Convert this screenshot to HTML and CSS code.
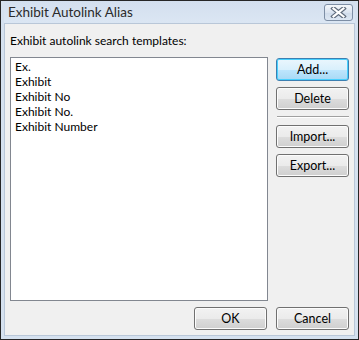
FILE: index.html
```html
<!DOCTYPE html>
<html>
<head>
<meta charset="utf-8">
<link rel="stylesheet" href="styles.css">
</head>
<body>
<div class="window">
  <div class="titlebar">
    <span class="title">Exhibit Autolink Alias</span>
    <div class="close">
      <svg width="17" height="11" viewBox="0 0 17 11">
        <path d="M3.5 1.5 L13.5 9.5 M13.5 1.5 L3.5 9.5" stroke="#5f6b7c" stroke-width="4.5" stroke-linecap="square"/>
        <path d="M3.5 1.5 L13.5 9.5 M13.5 1.5 L3.5 9.5" stroke="#ffffff" stroke-width="2.2" stroke-linecap="square"/>
      </svg>
    </div>
  </div>
  <div class="client">
    <div class="label">Exhibit autolink search templates:</div>
    <div class="main">
      <div class="list">
        <div class="item">Ex.</div>
        <div class="item">Exhibit</div>
        <div class="item">Exhibit No</div>
        <div class="item">Exhibit No.</div>
        <div class="item">Exhibit Number</div>
      </div>
      <div class="side">
        <button class="btn default">Add...</button>
        <button class="btn">Delete</button>
        <div class="sep"></div>
        <button class="btn">Import...</button>
        <button class="btn">Export...</button>
      </div>
    </div>
    <div class="footer">
      <button class="btn">OK</button>
      <button class="btn">Cancel</button>
    </div>
  </div>
</div>
</body>
</html>
```
FILE: styles.css
```css
html, body {
  margin: 0;
  padding: 0;
  background: #ffffff;
}
.window {
  position: relative;
  box-sizing: border-box;
  width: 359px;
  height: 340px;
  border: 1px solid #262626;
  background: #d5e1ef;
  padding: 0 3px 3px 3px;
  display: flex;
  flex-direction: column;
  font-family: Lato, "Noto Sans", sans-serif;
  font-size: 12px;
  color: #000;
}
.titlebar {
  height: 22px;
  flex: none;
  background: linear-gradient(#d3dfee, #dbe6f3);
  position: relative;
}
.title {
  position: absolute;
  left: 4px;
  top: 4px;
  line-height: 15px;
  font-size: 13.5px;
  color: #2a2a2a;
}
.close {
  position: absolute;
  left: 320px;
  top: 3px;
  width: 27px;
  height: 15px;
  border: 1px solid #7d8ea5;
  border-radius: 3px;
  background: linear-gradient(#f4f7fb, #dbe4f0 50%, #cfdbea 51%, #dde7f3);
  display: flex;
  align-items: center;
  justify-content: center;
}
.close svg { display: block; }
.client {
  flex: 1;
  background: #f0f0f0;
  border: 1px solid #b9c7d8;
  padding: 9px 5px 4px 4px;
  display: flex;
  flex-direction: column;
}
.label {
  line-height: 15px;
  padding-left: 1px;
  margin-bottom: 9px;
}
.main {
  display: flex;
  gap: 8px;
  flex: none;
}
.list {
  box-sizing: border-box;
  width: 259px;
  height: 244px;
  margin-left: 1px;
  background: #fff;
  border: 1px solid #828790;
  padding: 1px 4px;
}
.item {
  line-height: 15px;
}
.side {
  display: flex;
  flex-direction: column;
  gap: 6px;
  padding-top: 1px;
}
.btn {
  box-sizing: border-box;
  width: 73px;
  height: 23px;
  margin: 0;
  padding: 0;
  border: 1px solid #707070;
  border-radius: 3px;
  background: linear-gradient(#f2f2f2, #ebebeb 50%, #dddddd 51%, #cfcfcf);
  box-shadow: inset 0 0 0 1px #fcfcfc;
  font-family: Lato, "Noto Sans", sans-serif;
  font-size: 12.5px;
  color: #000;
  line-height: 15px;
}
.btn.default {
  border-color: #3c7fb1;
  background: linear-gradient(#eaf6fd, #d9f0fc 50%, #bee6fd 51%, #a7d9f5);
  box-shadow: inset 0 0 0 1px #48d0fe;
}
.sep {
  height: 1px;
  border-top: 1px solid #a0a0a0;
  background: #ffffff;
  margin: 0 0 1px 1px;
  width: 72px;
}
.footer {
  margin-top: 6px;
  display: flex;
  justify-content: flex-end;
  gap: 9px;
}
```
